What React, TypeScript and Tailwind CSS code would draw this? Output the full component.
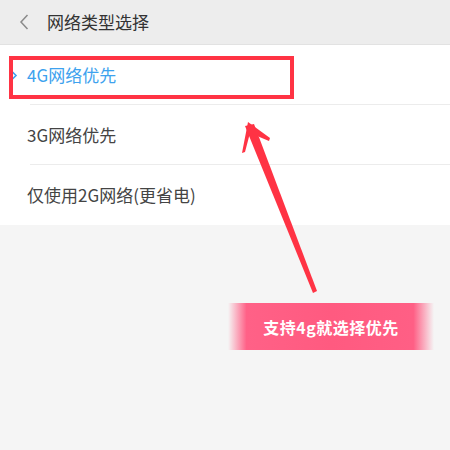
import React from 'react'

const font = '"Noto Sans CJK SC", "Noto Sans", sans-serif'

function Row({ label, active, divider }: { label: string; active?: boolean; divider?: boolean }) {
  return (
    <div className="relative h-[60px] flex items-center pl-[27px]">
      {active && (
        <svg className="absolute left-[11px] top-[26px]" width="7" height="9" viewBox="0 0 7 9">
          <path d="M1.5 1 L5 4.5 L1.5 8" fill="none" stroke="#3ea2ee" strokeWidth="1.6" />
        </svg>
      )}
      <span className={`text-[17px] ${active ? 'text-[#3ea2ee]' : 'text-[#444]'}`}>{label}</span>
      {divider && <div className="absolute bottom-0 left-[30px] right-0 h-px bg-[#ececec]" />}
    </div>
  )
}

export default function App() {
  return (
    <div className="relative w-[450px] h-[450px] bg-[#f5f5f5] overflow-hidden" style={{ fontFamily: font }}>
      <div className="h-[45px] bg-[#ededed] border-b border-[#e2e2e2] flex items-center">
        <svg className="ml-[19px]" width="10" height="16" viewBox="0 0 10 16">
          <path d="M8.5 1 L2 8 L8.5 15" fill="none" stroke="#8a8a8a" strokeWidth="1.5" />
        </svg>
        <span className="ml-[18px] text-[17px] text-[#333]">网络类型选择</span>
      </div>
      <div className="bg-white">
        <Row label="4G网络优先" active divider />
        <Row label="3G网络优先" divider />
        <Row label="仅使用2G网络(更省电)" />
      </div>

      <div className="ml-[228px] mt-[78px] w-[206px] h-[47px] flex items-center justify-center bg-[linear-gradient(to_right,rgba(255,90,125,0)_0%,#ff6187_9%,#ff5a80_50%,#ff5f85_90%,rgba(255,90,125,0)_100%)]">
        <span className="text-white text-[16px] font-bold tracking-[0.5px]">支持4g就选择优先</span>
      </div>

      {/* red highlight box */}
      <div className="absolute left-[9px] top-[56px] w-[285px] h-[43px] border-[4px] border-[#ff3344]" />

      {/* arrow */}
      <svg className="absolute left-0 top-0 pointer-events-none" width="450" height="450" viewBox="0 0 450 450">
        <path d="M245 126 L254 124 L317 291 L313 293 Z" fill="#ff3344" />
        <path d="M248 122 L242 153 L245 152 L250 133 L269 141 L270 138 Z" fill="#ff3344" />
      </svg>
    </div>
  )
}
